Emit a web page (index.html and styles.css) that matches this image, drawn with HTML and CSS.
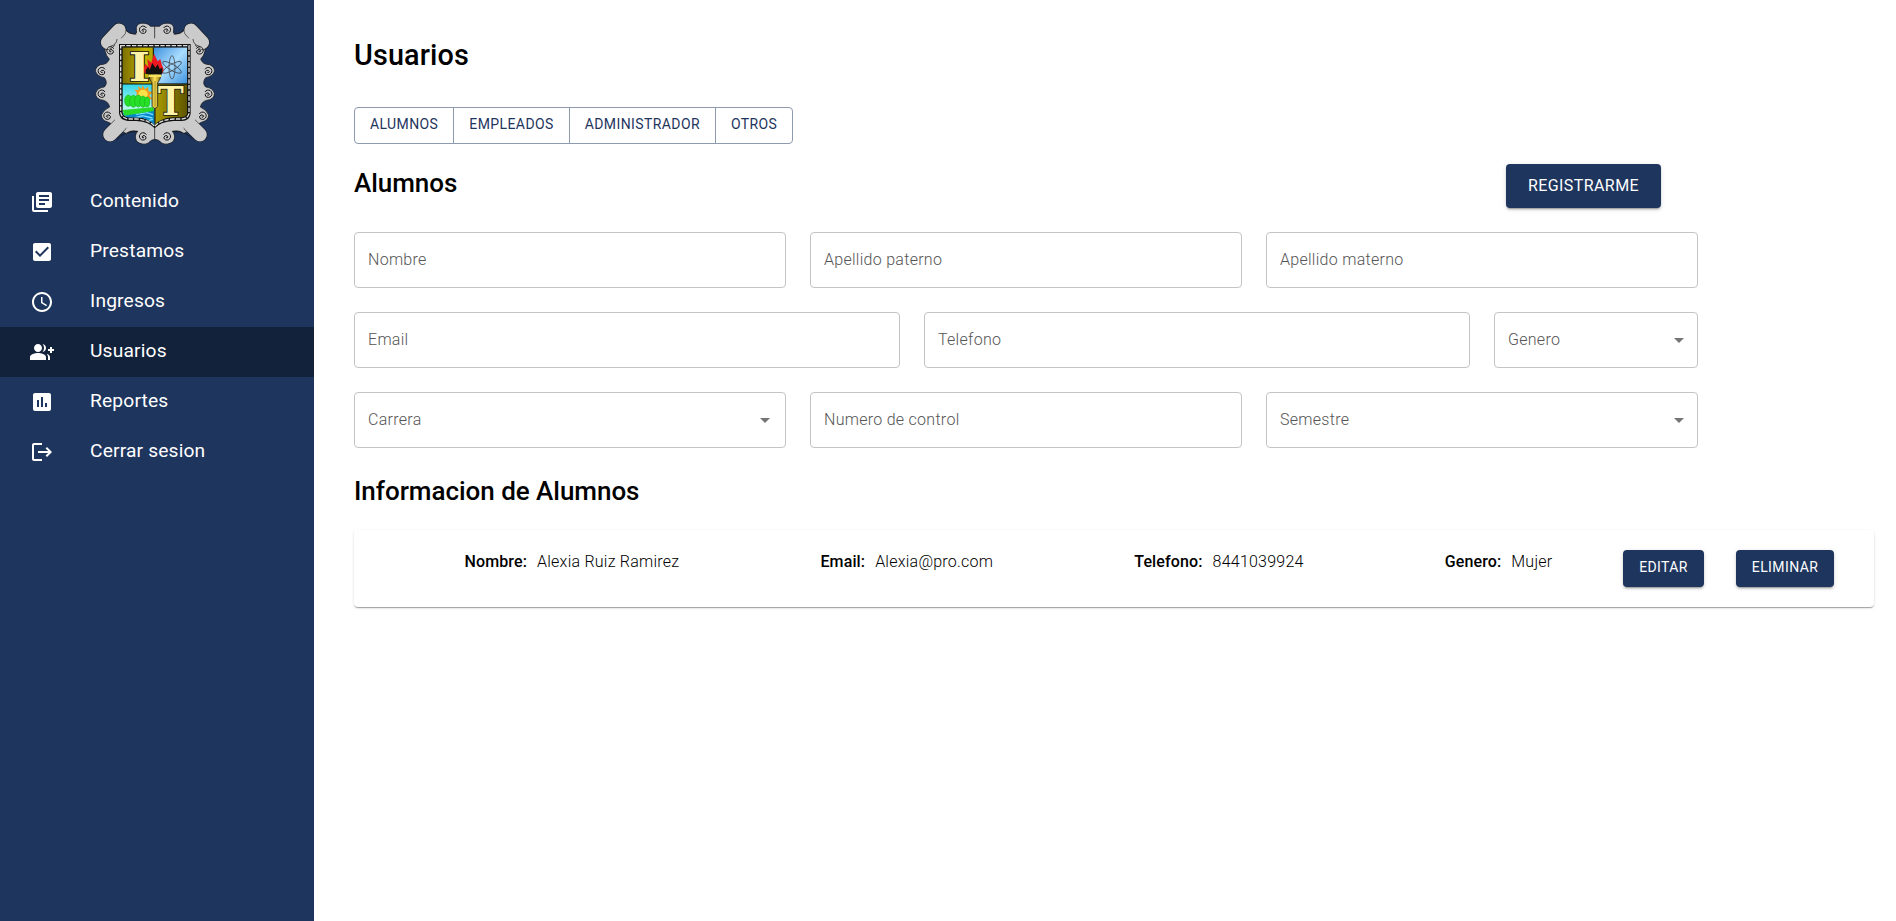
FILE: index.html
```html
<!DOCTYPE html>
<html lang="es">
<head>
<meta charset="utf-8">
<title>Usuarios</title>
<link rel="stylesheet" href="styles.css">
</head>
<body>
<div class="app">
  <aside class="sidebar">
    <svg class="logo" viewBox="0 0 420 405" aria-label="Escudo">
      <defs>
        <linearGradient id="gold" x1="0" y1="0" x2="1" y2="0"><stop offset="0" stop-color="#7a6e00"/><stop offset=".35" stop-color="#c4b400"/><stop offset="1" stop-color="#5e5400"/></linearGradient>
        <linearGradient id="sky" x1="0" y1="0" x2="1" y2="1"><stop offset="0" stop-color="#3a8fdc"/><stop offset=".5" stop-color="#a9dcff"/><stop offset="1" stop-color="#3e93dd"/></linearGradient>
        <linearGradient id="dawn" x1="0" y1="0" x2="0" y2="1"><stop offset="0" stop-color="#35d6e8"/><stop offset=".6" stop-color="#b8f8f0"/><stop offset="1" stop-color="#2fa9df"/></linearGradient>
        <linearGradient id="torch" x1="0" y1="0" x2="1" y2="0"><stop offset="0" stop-color="#6b5600"/><stop offset=".5" stop-color="#ffe35a"/><stop offset="1" stop-color="#7c6500"/></linearGradient>
        <clipPath id="shield"><path d="M112 97H307V294Q303 307 288 307H262Q225 310 209 330Q193 310 157 307H130Q115 305 112 292Z"/></clipPath>
        <path id="curl" fill="none" stroke="#111" stroke-width="3" d="M10 -5A11 11 0 1 0 8 8Q12 2 5 -2Q-1 -4 -3 2Q-2 6 3 4"/>
        <path id="half" d="M211 34H196Q188 23 168 25Q152 28 154 45Q158 55 150 57Q130 56 119 42L72 90Q60 92 60 108Q64 124 73 132Q68 149 46 149Q29 158 32 170Q37 184 58 188Q70 203 58 216Q38 218 32 234Q31 248 46 254Q70 256 74 276Q56 284 49 300Q50 316 66 320Q80 324 82 332L124 356Q136 344 158 349Q146 362 155 379Q172 393 190 384Q199 373 211 373Z"/>
      </defs>
      <g fill="#cbcbcb" stroke="#111" stroke-width="2">
        <use href="#half"/><use href="#half" transform="translate(420 0) scale(-1 1)"/>
      </g>
      <g stroke="#111" stroke-width="44"><path stroke-linecap="round" d="M102 46L68 82M318 46L352 82M75 359L106 328M345 359L314 328"/></g>
      <g stroke="#cbcbcb" stroke-width="41"><path stroke-linecap="round" d="M102 46L68 82M318 46L352 82M75 359L106 328M345 359L314 328"/></g>
      <path d="M90 70H330V338H90Z" fill="#cbcbcb"/>
      <path d="M122 46Q132 58 154 58M298 46Q288 58 266 58M76 94Q95 90 96 72M344 94Q325 90 324 72M96 374Q112 350 158 349M324 374Q308 350 262 349" fill="none" stroke="#111" stroke-width="2"/>
      <g>
        <use href="#curl" x="174" y="44"/><use href="#curl" transform="translate(246 44) scale(-1 1)"/>
        <use href="#curl" x="76" y="106"/><use href="#curl" transform="translate(344 106) scale(-1 1)"/>
        <use href="#curl" x="50" y="168"/><use href="#curl" transform="translate(370 168) scale(-1 1)"/>
        <use href="#curl" x="50" y="236"/><use href="#curl" transform="translate(370 236) scale(-1 1)"/>
        <use href="#curl" x="67" y="302"/><use href="#curl" transform="translate(353 302) scale(-1 1)"/>
        <use href="#curl" x="174" y="364"/><use href="#curl" transform="translate(246 364) scale(-1 1)"/>
      </g>
      <path d="M102 87H317V297Q313 318 291 318H266Q225 321 209 340Q193 321 154 318H128Q104 315 102 295Z" fill="#111"/>
      <path d="M107 92H312V296Q307 312 289 312H264Q225 315 209 334Q193 315 155 312H129Q110 309 107 293Z" fill="none" stroke="#ddd" stroke-width="4" stroke-dasharray="13 4"/>
      <g clip-path="url(#shield)">
        <path fill="url(#gold)" d="M112 97h94v110h-94zM209 207h98v125h-98z"/>
        <path fill="url(#sky)" d="M206 97h101v109H206z"/>
        <path fill="url(#dawn)" d="M112 207h96v125h-96z"/>
        <path d="M112 295L208 282V332H112Z" fill="#0786c8"/>
        <path d="M120 298l28-5 8 5 30-5 18 6M148 309l25-7 29 7M185 318l19-5" fill="none" stroke="#79dcff" stroke-width="4"/>
        <path d="M173 210l6 13 11-8 0 14 16 2-13 10 9 12H155V232l-7-8 13 1-2-11 11 7z" fill="#f49a18"/><circle cx="174" cy="238" r="14" fill="#ffe24a"/>
        <g fill="#28df27" stroke="#16b51a" stroke-width="2"><ellipse cx="130" cy="257" rx="11" ry="17"/><ellipse cx="145" cy="259" rx="11" ry="18"/><ellipse cx="160" cy="258" rx="11" ry="18"/><ellipse cx="174" cy="260" rx="10" ry="17"/><ellipse cx="186" cy="261" rx="8" ry="15"/></g>
        <path d="M113 285L206 276V288L118 302Z" fill="#29db28"/>
      </g>
      <path d="M205 98V207M112 207H307M210 207V328" stroke="#111" stroke-width="3"/>
      <g fill="none" stroke="#333" stroke-width="2"><ellipse cx="261" cy="157" rx="9" ry="35"/><ellipse cx="261" cy="157" rx="9" ry="32" transform="rotate(60 261 157)"/><ellipse cx="261" cy="157" rx="9" ry="32" transform="rotate(-60 261 157)"/></g>
      <text class="crest-letter" x="163" y="198" textLength="64" lengthAdjust="spacingAndGlyphs">I</text>
      <text class="crest-letter" x="257" y="301" textLength="78" lengthAdjust="spacingAndGlyphs">T</text>
      <path d="M180 176Q173 159 182 146L190 157L187 133L199 143L207 116L218 139L226 132L231 151Q240 166 230 177Z" fill="#f01820"/>
      <path d="M182 177V166L189 155L194 164L202 144L211 158L218 148L224 162L232 158V177Z" fill="#111"/>
      <path d="M190 178H229L225 192L218 204V274Q209 286 201 274V204L194 192Z" fill="url(#torch)" stroke="#111" stroke-width="2"/><path d="M190 179H229V186H190Z" fill="#f7e35e"/><path d="M210 198V275" stroke="#756000" stroke-width="2"/>
    </svg>
    <nav class="nav">
      <a class="nav-item"><svg class="icon" viewBox="0 0 24 24"><path d="M4 6H2v14c0 1.100.9 2 2 2h14v-2H4V6zm16-4H8c-1.100 0-2 .9-2 2v12c0 1.100.9 2 2 2h12c1.100 0 2-.9 2-2V4c0-1.100-.9-2-2-2zm-1 9H9V9h10v2zm-4 4H9v-2h6v2zm4-8H9V5h10v2z"/></svg><span>Contenido</span></a>
      <a class="nav-item"><svg class="icon" viewBox="0 0 24 24"><path d="M19 3H5c-1.110 0-2 .9-2 2v14c0 1.100.89 2 2 2h14c1.110 0 2-.9 2-2V5c0-1.100-.89-2-2-2zm-9 14l-5-5 1.410-1.410L10 14.170l7.590-7.590L19 8l-9 9z"/></svg><span>Prestamos</span></a>
      <a class="nav-item"><svg class="icon" viewBox="0 0 24 24"><path d="M11.990 2C6.470 2 2 6.480 2 12s4.470 10 9.990 10C17.520 22 22 17.520 22 12S17.520 2 11.990 2zM12 20c-4.420 0-8-3.580-8-8s3.580-8 8-8 8 3.580 8 8-3.580 8-8 8zM12.500 7H11v6l5.250 3.150.75-1.230-4.500-2.670z"/></svg><span>Ingresos</span></a>
      <a class="nav-item active"><svg class="icon" viewBox="0 0 24 24"><path d="M22 9V7h-2v2h-2v2h2v2h2v-2h2V9zM8 12c2.210 0 4-1.790 4-4s-1.790-4-4-4-4 1.790-4 4 1.790 4 4 4zm0 1c-2.670 0-8 1.340-8 4v3h16v-3c0-2.660-5.330-4-8-4zM12.510 4.050C13.430 5.110 14 6.490 14 8s-.57 2.890-1.490 3.950C14.470 11.700 16 10.040 16 8s-1.530-3.700-3.490-3.950zM16.530 13.830C17.420 14.660 18 15.700 18 17v3h2v-3c0-1.450-1.590-2.510-3.470-3.170z"/></svg><span>Usuarios</span></a>
      <a class="nav-item"><svg class="icon" viewBox="0 0 24 24"><path d="M19 3H5c-1.100 0-2 .9-2 2v14c0 1.100.9 2 2 2h14c1.100 0 2-.9 2-2V5c0-1.100-.9-2-2-2zM9 17H7v-7h2v7zm4 0h-2V7h2v10zm4 0h-2v-4h2v4z"/></svg><span>Reportes</span></a>
      <a class="nav-item"><svg class="icon" viewBox="0 0 24 24"><path d="M17 7l-1.410 1.410L18.170 11H8v2h10.170l-2.580 2.580L17 17l5-5zM4 5h8V3H4c-1.100 0-2 .9-2 2v14c0 1.100.9 2 2 2h8v-2H4V5z"/></svg><span>Cerrar sesion</span></a>
    </nav>
  </aside>
  <main class="main">
    <h1 class="page-title">Usuarios</h1>
    <div class="tabs">
      <button class="tab"><span>Alumnos</span></button><button class="tab"><span>Empleados</span></button><button class="tab"><span>Administrador</span></button><button class="tab"><span>Otros</span></button>
    </div>
    <div class="form-head">
      <h2 class="section-title">Alumnos</h2>
      <button class="btn btn-large"><span>Registrarme</span></button>
    </div>
    <form class="form">
      <div class="field span-4">Nombre</div>
      <div class="field span-4">Apellido paterno</div>
      <div class="field span-4">Apellido materno</div>
      <div class="field span-5">Email</div>
      <div class="field span-5">Telefono</div>
      <div class="field span-2">Genero<svg class="arrow" viewBox="0 0 24 24"><path d="M7 10l5 5 5-5z"/></svg></div>
      <div class="field span-4 inset">Carrera<svg class="arrow" viewBox="0 0 24 24"><path d="M7 10l5 5 5-5z"/></svg></div>
      <div class="field span-4">Numero de control</div>
      <div class="field span-4">Semestre<svg class="arrow" viewBox="0 0 24 24"><path d="M7 10l5 5 5-5z"/></svg></div>
    </form>
    <h2 class="section-title info-title">Informacion de Alumnos</h2>
    <section class="card">
      <div class="details">
        <p class="detail"><b>Nombre:</b><span>Alexia Ruiz Ramirez</span></p>
        <p class="detail"><b>Email:</b><span>Alexia@pro.com</span></p>
        <p class="detail"><b>Telefono:</b><span>8441039924</span></p>
        <p class="detail"><b>Genero:</b><span>Mujer</span></p>
      </div>
      <div class="actions">
        <button class="btn btn-edit"><span>Editar</span></button>
        <button class="btn btn-delete"><span>Eliminar</span></button>
      </div>
    </section>
  </main>
</div>
</body>
</html>
```
FILE: styles.css
```css
* { box-sizing: border-box; }
body { margin: 0; font-family: Roboto, "Liberation Sans", sans-serif; font-size: 16px; color: #000; background: #fff; }
h1, h2, p { margin: 0; }
button { font-family: inherit; text-transform: uppercase; cursor: pointer; }
.app { display: flex; height: 921px; }
.sidebar { width: 314px; flex: none; background: #1e355e; color: #fff; display: flex; flex-direction: column; padding-top: 15px; }
.logo { width: 140px; height: 135px; margin-left: 85px; }
.crest-letter { font-family: "DejaVu Serif", serif; font-weight: 700; font-size: 116px; text-anchor: middle; fill: #fff3a8; stroke: #111; stroke-width: 5px; paint-order: stroke; }
.nav { margin-top: 27px; display: flex; flex-direction: column; }
.nav-item { height: 50px; padding-left: 30px; display: flex; align-items: center; gap: 36px; font-size: 19.200px; letter-spacing: .17px; }
.nav-item.active { background: #13223b; }
.nav-item span { padding-bottom: 4px; }
.icon { width: 24px; height: 24px; fill: #fff; }
.main { flex: 1; padding: 39px 22px 0 40px; }
.page-title { font-size: 28.800px; line-height: 32px; font-weight: 500; letter-spacing: .12px; }
.tabs { display: flex; margin-top: 36px; width: max-content; border: 1px solid #8e9aae; border-radius: 4px; }
.tab { height: 35px; padding: 0 15px 3px; border: 0; border-right: 1px solid #8e9aae; background: none; color: #1e355e; font-size: 14px; font-weight: 400; letter-spacing: .4px; }
.tab:last-child { border-right: 0; }
.form-head { display: flex; justify-content: space-between; align-items: flex-start; width: 1307px; height: 44px; margin-top: 20px; }
.section-title { font-size: 26px; line-height: 30px; font-weight: 500; letter-spacing: -.03px; margin-top: 4px; }
.btn { height: 37px; padding: 0 0 3px; border: 0; border-radius: 4px; background: #1e355e; color: #fff; font-size: 14px; font-weight: 450; letter-spacing: .4px; box-shadow: 0 3px 1px -2px rgba(0,0,0,.2), 0 2px 2px rgba(0,0,0,.14), 0 1px 5px rgba(0,0,0,.12); }
.btn-edit { width: 81px; }
.btn-delete { width: 98px; }
.btn-large { width: 155px; height: 44px; padding: 0 0 2px; font-size: 16px; letter-spacing: .42px; }
.form { display: grid; grid-template-columns: repeat(12, 1fr); gap: 24px; width: 1344px; margin-top: 24px; }
.field { height: 56px; padding: 0 6px 1px 13px; border: 1px solid #c4c4c4; border-radius: 4px; display: flex; align-items: center; justify-content: space-between; color: #555; font-weight: 300; letter-spacing: .28px; }
.inset { padding-right: 8px; }
.span-2 { grid-column: span 2; }
.span-4 { grid-column: span 4; }
.span-5 { grid-column: span 5; }
.arrow { width: 24px; height: 24px; fill: #757575; }
.info-title { margin-top: 28px; }
.card { display: flex; margin-top: 24px; height: 77px; padding: 20px 40px; border-radius: 4px; box-shadow: 0 2px 1px -1px rgba(0,0,0,.2), 0 1px 1px rgba(0,0,0,.14), 0 1px 3px rgba(0,0,0,.12); }
.details { flex: 1; display: flex; justify-content: space-around; }
.detail { display: flex; gap: 10px; line-height: 24px; font-weight: 300; letter-spacing: .24px; }
.detail b { font-weight: 500; letter-spacing: .12px; }
.actions { display: flex; gap: 32px; }
```
